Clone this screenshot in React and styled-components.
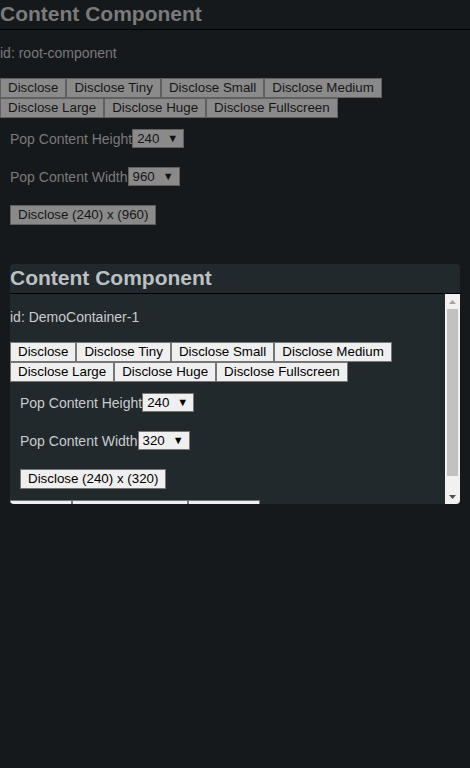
import React, {useState} from "react";
import styled, {createGlobalStyle, css} from "styled-components";

const GlobalStyle = createGlobalStyle`
  html, body {
    margin: 0;
    min-height: 100%;
    background: #16191c;
  }
  body {
    font-family: "Liberation Sans", Arial, sans-serif;
    font-size: 14px;
  }
`

const Page = styled.div`
  position: relative;
  min-height: 768px;
`

const Component = styled.section`
  color: ${p => p.$dim ? '#7a7a7a' : '#c9cccd'};
`

const Title = styled.h1`
  margin: 0;
  padding: 2px 0 3px;
  font-size: 21px;
  line-height: 24px;
  font-weight: bold;
  color: ${p => p.$dim ? '#7b7b7b' : '#bcc0c2'};
  border-bottom: 1px solid #000;
`

const Ident = styled.p`
  margin: 15px 0 0;
  line-height: 16px;
`

const ButtonBar = styled.div`
  display: flex;
  flex-wrap: wrap;
  margin-top: ${p => p.$top}px;
`

const Button = styled.button`
  box-sizing: border-box;
  height: 20px;
  padding: 0 7px;
  margin: 0;
  font-family: "Liberation Sans", Arial, sans-serif;
  font-size: 13.333px;
  line-height: 18px;
  white-space: nowrap;
  ${p => p.$dim ? css`
    background: #8a8a8a;
    border: 1px solid #606060;
    color: #161616;
  ` : css`
    background: #efefef;
    border: 1px solid #767676;
    color: #000;
  `}
  ${p => p.$w && css`width: ${p.$w}px;`}
`

const Field = styled.div`
  display: flex;
  align-items: center;
  height: 19px;
  margin: ${p => p.$top}px 0 0 10px;
`

const SelectBox = styled.span`
  position: relative;
  display: inline-block;
  height: 19px;

  &::after {
    content: "▼";
    position: absolute;
    right: 6px;
    top: 3px;
    font-size: 11px;
    line-height: 12px;
    color: ${p => p.$dim ? '#111' : '#000'};
    pointer-events: none;
  }
`

const Select = styled.select`
  appearance: none;
  box-sizing: border-box;
  width: 52px;
  height: 19px;
  margin: 0;
  padding: 0 0 0 4px;
  font-family: "Liberation Sans", Arial, sans-serif;
  font-size: 13.333px;
  border-radius: 0;
  outline: none;
  ${p => p.$dim ? css`
    background: #8a8a8a;
    border: 1px solid #606060;
    color: #161616;
  ` : css`
    background: #efefef;
    border: 1px solid #767676;
    color: #000;
  `}
`

const Action = styled.div`
  margin: 19px 0 0 10px;
`

const Popup = styled.div`
  position: absolute;
  left: 10px;
  top: 264px;
  width: 450px;
  height: 240px;
  display: flex;
  flex-direction: column;
  background: #22292c;
  border-radius: 4px;
  overflow: hidden;
`

const ScrollArea = styled.div`
  flex: 1;
  min-height: 0;
  display: flex;
`

const ScrollBody = styled.div`
  flex: 1;
  overflow-y: auto;
  scrollbar-width: none;
  padding-bottom: 9px;
`

const Rail = styled.div`
  width: 15px;
  flex: none;
  display: flex;
  flex-direction: column;
  background: #f1f1f1;
`

const RailButton = styled.div`
  height: 15px;
  flex: none;
  display: flex;
  align-items: center;
  justify-content: center;
`

const Track = styled.div`
  flex: 1;
  padding: 0 2px;
`

const Thumb = styled.div`
  height: 167px;
  background: #c1c1c1;
`

const Arrow = ({down}) => (
    <svg width="7" height="4" viewBox="0 0 7 4">
        {down
            ? <polygon points="0,0 7,0 3.5,4" fill="#505050"/>
            : <polygon points="3.5,0 7,4 0,4" fill="#a3a3a3"/>}
    </svg>
)

const sizes = ['Disclose', 'Disclose Tiny', 'Disclose Small', 'Disclose Medium', 'Disclose Large', 'Disclose Huge', 'Disclose Fullscreen']

const ContentBody = ({id, dim, width, extra}) => {
    const [h, setH] = useState('240')
    const [w, setW] = useState(width)
    return (<React.Fragment>
        <Ident>id: {id}</Ident>
        <ButtonBar $top={17}>
            {sizes.map(s => <Button key={s} $dim={dim}>{s}</Button>)}
        </ButtonBar>
        <Field $top={11}>
            Pop Content Height
            <SelectBox $dim={dim}>
                <Select $dim={dim} value={h} onChange={e => setH(e.target.value)}>
                    <option>120</option>
                    <option>240</option>
                    <option>480</option>
                </Select>
            </SelectBox>
        </Field>
        <Field $top={19}>
            Pop Content Width
            <SelectBox $dim={dim}>
                <Select $dim={dim} value={w} onChange={e => setW(e.target.value)}>
                    <option>320</option>
                    <option>640</option>
                    <option>960</option>
                </Select>
            </SelectBox>
        </Field>
        <Action>
            <Button $dim={dim}>Disclose ({h}) x ({w})</Button>
        </Action>
        {extra &&
            <ButtonBar $top={11}>
                <Button $w={62}>Close</Button>
                <Button $w={116}>Close All Children</Button>
                <Button $w={72}>Refresh</Button>
            </ButtonBar>
        }
    </React.Fragment>)
}

export default function App() {
    return (<Page>
        <GlobalStyle/>
        <Component $dim>
            <Title $dim>Content Component</Title>
            <ContentBody id="root-component" dim width="960"/>
        </Component>
        <Popup>
            <Component>
                <Title>Content Component</Title>
            </Component>
            <ScrollArea>
                <ScrollBody>
                    <Component>
                        <ContentBody id="DemoContainer-1" width="320" extra/>
                    </Component>
                </ScrollBody>
                <Rail>
                    <RailButton><Arrow/></RailButton>
                    <Track><Thumb/></Track>
                    <RailButton><Arrow down/></RailButton>
                </Rail>
            </ScrollArea>
        </Popup>
    </Page>)
}
